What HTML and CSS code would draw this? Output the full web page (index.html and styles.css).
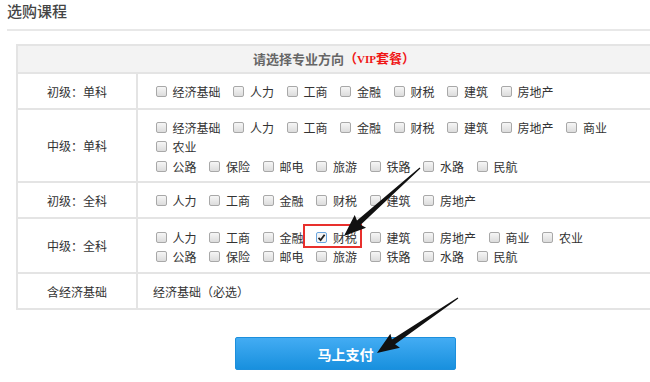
FILE: index.html
```html
<!DOCTYPE html>
<html lang="zh-CN">
<head>
<meta charset="utf-8">
<title>选购课程</title>
<link rel="stylesheet" href="styles.css">
</head>
<body>
<div class="page">
  <h2 class="title">选购课程</h2>
  <table class="course">
    <tr>
      <th colspan="2"><div class="head">请选择专业方向<span class="vip">（<span class="vip-en">VIP</span>套餐）</span></div></th>
    </tr>
    <tr class="r1">
      <td class="lbl">初级：单科</td>
      <td class="opts">
        <div class="list">
          <label class="opt"><input type="checkbox">经济基础</label><label class="opt"><input type="checkbox">人力</label><label class="opt"><input type="checkbox">工商</label><label class="opt"><input type="checkbox">金融</label><label class="opt"><input type="checkbox">财税</label><label class="opt"><input type="checkbox">建筑</label><label class="opt"><input type="checkbox">房地产</label>
        </div>
      </td>
    </tr>
    <tr class="r2">
      <td class="lbl">中级：单科</td>
      <td class="opts">
        <div class="list">
          <label class="opt"><input type="checkbox">经济基础</label><label class="opt"><input type="checkbox">人力</label><label class="opt"><input type="checkbox">工商</label><label class="opt"><input type="checkbox">金融</label><label class="opt"><input type="checkbox">财税</label><label class="opt"><input type="checkbox">建筑</label><label class="opt"><input type="checkbox">房地产</label><label class="opt"><input type="checkbox">商业</label><label class="opt"><input type="checkbox">农业</label>
        </div>
        <div class="list gap">
          <label class="opt"><input type="checkbox">公路</label><label class="opt"><input type="checkbox">保险</label><label class="opt"><input type="checkbox">邮电</label><label class="opt"><input type="checkbox">旅游</label><label class="opt"><input type="checkbox">铁路</label><label class="opt"><input type="checkbox">水路</label><label class="opt"><input type="checkbox">民航</label>
        </div>
      </td>
    </tr>
    <tr class="r3">
      <td class="lbl">初级：全科</td>
      <td class="opts">
        <div class="list">
          <label class="opt"><input type="checkbox">人力</label><label class="opt"><input type="checkbox">工商</label><label class="opt"><input type="checkbox">金融</label><label class="opt"><input type="checkbox">财税</label><label class="opt"><input type="checkbox">建筑</label><label class="opt"><input type="checkbox">房地产</label>
        </div>
      </td>
    </tr>
    <tr class="r4">
      <td class="lbl">中级：全科</td>
      <td class="opts">
        <div class="list">
          <label class="opt"><input type="checkbox">人力</label><label class="opt"><input type="checkbox">工商</label><label class="opt"><input type="checkbox">金融</label><label class="opt"><input type="checkbox" class="on" checked>财税</label><label class="opt"><input type="checkbox">建筑</label><label class="opt"><input type="checkbox">房地产</label><label class="opt"><input type="checkbox">商业</label><label class="opt"><input type="checkbox">农业</label>
        </div>
        <div class="list">
          <label class="opt"><input type="checkbox">公路</label><label class="opt"><input type="checkbox">保险</label><label class="opt"><input type="checkbox">邮电</label><label class="opt"><input type="checkbox">旅游</label><label class="opt"><input type="checkbox">铁路</label><label class="opt"><input type="checkbox">水路</label><label class="opt"><input type="checkbox">民航</label>
        </div>
      </td>
    </tr>
    <tr class="r5">
      <td class="lbl">含经济基础</td>
      <td class="opts"><div class="plain">经济基础（必选）</div></td>
    </tr>
  </table>
  <div class="actions">
    <button class="pay" type="button">马上支付</button>
  </div>
</div>
<svg class="marks" width="650" height="382" viewBox="0 0 650 382" aria-hidden="true">
  <rect x="304" y="225" width="57" height="22" fill="none" stroke="#e8302d" stroke-width="2"/>
  <g transform="translate(420 168) rotate(138.2)">
    <polygon points="0,-0.6 82,-2.8 80,-8.5 102,0 80,8.5 82,2.8 0,0.6" fill="#111"/>
  </g>
  <g transform="translate(458 298) rotate(145.8)">
    <polygon points="0,-0.6 78,-2.8 76,-8.5 98,0 76,8.5 78,2.8 0,0.6" fill="#111"/>
  </g>
</svg>
</body>
</html>
```
FILE: styles.css
```css
html, body {
  margin: 0;
  padding: 0;
  overflow: hidden;
  background: #fff;
}
body {
  font-family: "Noto Sans CJK SC", "Liberation Sans", sans-serif;
  font-size: 12px;
  color: #333;
  position: relative;
  width: 650px;
  height: 382px;
}
.title {
  margin: 0 0 0 7px;
  padding: 1px 0 8px;
  font-size: 15px;
  line-height: 20px;
  font-weight: 500;
  color: #444;
  border-bottom: 2px solid #e8e8e8;
}
.course {
  margin: 13px 0 0 16px;
  width: 636px;
  border-spacing: 0;
  border-top: 2px solid #e4e4e4;
  border-left: 2px solid #e4e4e4;
}
.course th,
.course td {
  border-right: 2px solid #e4e4e4;
  border-bottom: 2px solid #e4e4e4;
  line-height: 19px;
}
.course th {
  background: #f3f3f3;
  padding: 3px 0 4px;
  font-size: 13px;
  font-weight: bold;
  color: #666;
  text-align: center;
}
.head {
  height: 19px;
  display: flex;
  justify-content: center;
  align-items: center;
  white-space: nowrap;
}
.vip {
  color: #f01515;
}
.vip-en {
  font-family: "Liberation Serif", serif;
  font-size: 11px;
}
.lbl {
  width: 118px;
  padding: 0;
  text-align: center;
  vertical-align: middle;
}
.opts {
  padding: 8px 10px 7px 15px;
  vertical-align: top;
}
.r2 .opts { padding: 8px 10px 5px 15px; }
.r4 .opts { padding: 9px 10px 6px 15px; }
.plain { height: 19px; }
.list {
  display: flex;
  flex-wrap: wrap;
}
.list.gap { margin-top: 1px; }
.opt {
  display: inline-flex;
  align-items: center;
  height: 19px;
  margin-right: 10px;
  white-space: nowrap;
}
.opt input {
  -webkit-appearance: none;
  appearance: none;
  box-sizing: border-box;
  width: 11px;
  height: 11px;
  margin: 0 6px 0 2.5px;
  border: 1px solid #a8a8a8;
  border-radius: 2px;
  background: linear-gradient(#f6f6f6, #dcdcdc);
}
.opt input.on {
  border-color: #6aa6e0;
  background: #f4f4f4 url("data:image/svg+xml,%3Csvg xmlns='http://www.w3.org/2000/svg' viewBox='0 0 9 9'%3E%3Cpath d='M1.5 4.8 L3.6 7 L7.6 1.8' fill='none' stroke='%23222' stroke-width='1.8'/%3E%3C/svg%3E") center / 9px 9px no-repeat;
}
.actions {
  margin-top: 27px;
  padding-left: 235px;
}
.pay {
  width: 221px;
  height: 33px;
  border: 1px solid #1c8fdc;
  border-radius: 2px;
  background: linear-gradient(#43acf3, #1890de);
  color: #fff;
  font-family: "Noto Sans CJK SC", sans-serif;
  font-size: 14px;
  font-weight: bold;
  padding: 0;
}
.marks {
  position: absolute;
  top: 0;
  left: 0;
  pointer-events: none;
}
```
